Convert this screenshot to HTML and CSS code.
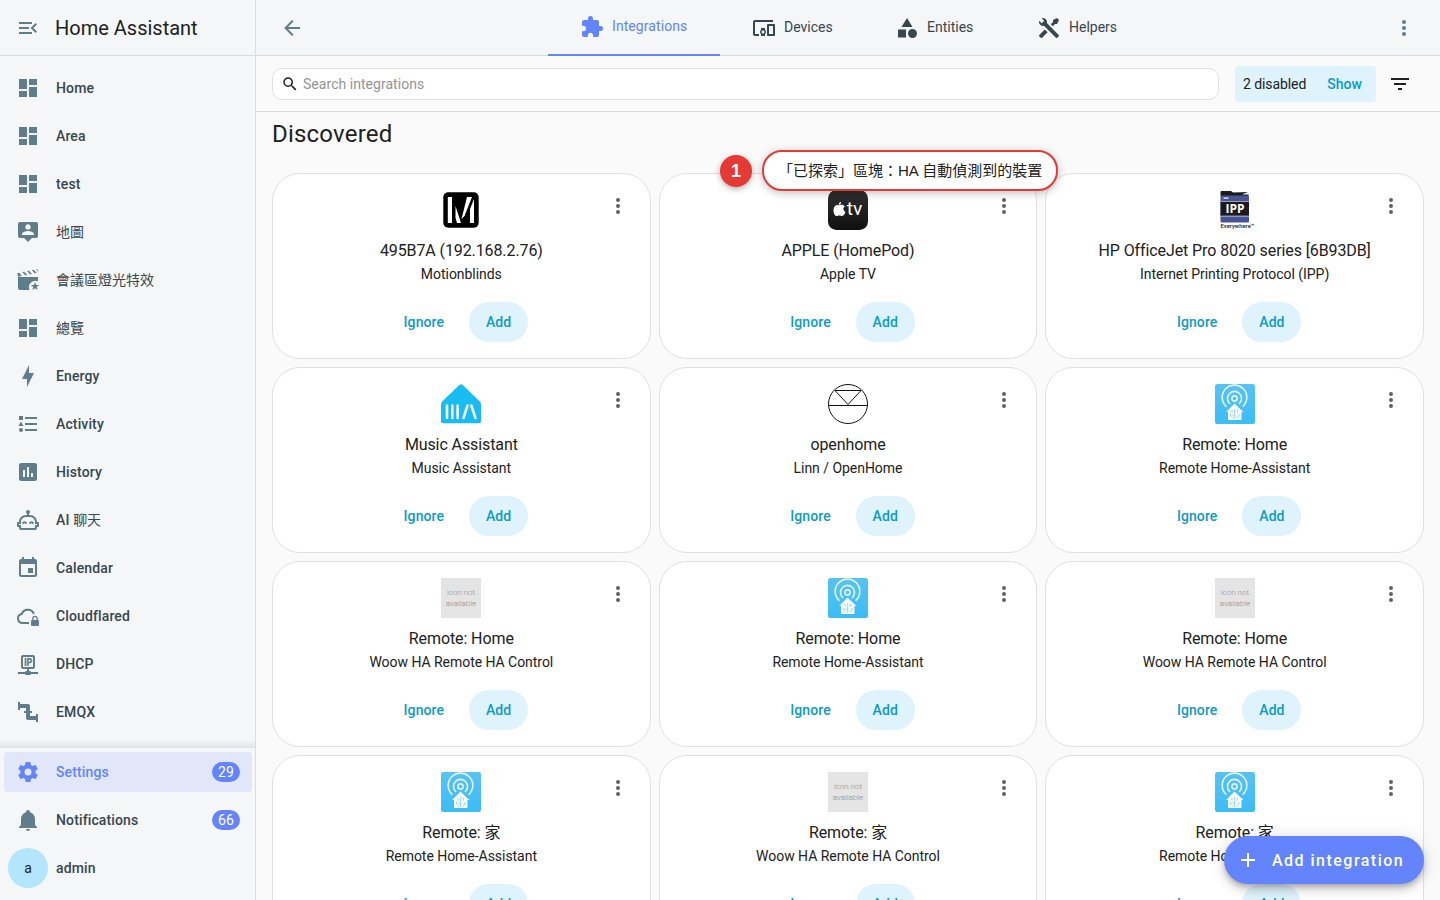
FILE: index.html
```html
<!DOCTYPE html>
<html lang="zh-Hant">
<head>
<meta charset="utf-8">
<title>Home Assistant</title>
<link rel="stylesheet" href="styles.css">
</head>
<body>
<svg class="defs" width="0" height="0">
  <defs>
    <linearGradient id="tvGrad" x1="0" y1="0" x2="0" y2="1"><stop offset="0" stop-color="#303030"/><stop offset="1" stop-color="#101010"/></linearGradient>
    <linearGradient id="remoteGrad" x1="0" y1="0" x2="0" y2="1"><stop offset="0" stop-color="#58c2f2"/><stop offset="1" stop-color="#3bbdf5"/></linearGradient>
  </defs>
  <symbol id="dashboard" viewBox="0 0 24 24"><path d="M13,3V9H21V3M13,21H21V11H13M3,21H11V15H3M3,13H11V3H3V13Z"/></symbol>
  <symbol id="dots" viewBox="0 0 24 24"><path d="M12,16A2,2 0 0,1 14,18A2,2 0 0,1 12,20A2,2 0 0,1 10,18A2,2 0 0,1 12,16M12,10A2,2 0 0,1 14,12A2,2 0 0,1 12,14A2,2 0 0,1 10,12A2,2 0 0,1 12,10M12,4A2,2 0 0,1 14,6A2,2 0 0,1 12,8A2,2 0 0,1 10,6A2,2 0 0,1 12,4Z"/></symbol>
  <symbol id="remote" viewBox="0 0 40 40">
    <rect width="40" height="40" rx="2.5" fill="url(#remoteGrad)"/>
    <g fill="none" stroke="#e4f3fb" stroke-width="1.6" stroke-linecap="round">
      <circle cx="19.5" cy="14.5" r="2.6"/>
      <path d="M14.6 19.4A7 7 0 1 1 24.400 19.4"/>
      <path d="M11 22.300A12.300 12.300 0 1 1 28 22.300"/>
    </g>
    <path d="M19.500 19.500L28.500 28H26.500V36H13V28H11Z" fill="#f5fbfe"/>
    <path d="M19.700 25V35M17 26V28.500M22.500 26V28.500M15.500 30V32L18 34M24 30V32L21.500 34M17.200 30.500L19.700 32" fill="none" stroke="#7cc6e6" stroke-width=".7"/>
  </symbol>
  <symbol id="missing" viewBox="0 0 40 40">
    <rect width="40" height="40" fill="#e4e4e4"/>
    <text class="missing-text" x="6" y="17" textLength="28" lengthAdjust="spacingAndGlyphs">icon not</text>
    <text class="missing-text" x="4.700" y="28" textLength="30.500" lengthAdjust="spacingAndGlyphs">available</text>
  </symbol>
</svg>

<div class="app">
  <aside class="sidebar">
    <div class="brand">
      <svg class="icon" viewBox="0 0 24 24"><path d="M21,15.61L19.59,17L14.58,12L19.59,7L21,8.39L17.44,12L21,15.61M3,6H16V8H3V6M3,13V11H13V13H3M3,18V16H16V18H3Z"/></svg>
      <span>Home Assistant</span>
    </div>
    <nav class="nav">
      <a class="item"><svg class="icon"><use href="#dashboard"/></svg><span>Home</span></a>
      <a class="item"><svg class="icon"><use href="#dashboard"/></svg><span>Area</span></a>
      <a class="item"><svg class="icon"><use href="#dashboard"/></svg><span>test</span></a>
      <a class="item"><svg class="icon" viewBox="0 0 24 24"><path d="M20,2H4A2,2 0 0,0 2,4V16A2,2 0 0,0 4,18H8L12,22L16,18H20A2,2 0 0,0 22,16V4A2,2 0 0,0 20,2M12,4.3C13.5,4.3 14.7,5.5 14.7,7C14.7,8.5 13.5,9.7 12,9.7C10.5,9.7 9.3,8.5 9.3,7C9.3,5.500 10.5,4.3 12,4.3M18,15H6V14.1C6,12.1 10,11 12,11C14,11 18,12.1 18,14.1V15Z"/></svg><span class="cjk">地圖</span></a>
      <a class="item"><svg class="icon" viewBox="0 0 24 24"><path d="M2 9H22V13.300A6.600 6.600 0 0 0 13.500 22H4A2 2 0 0 1 2 20ZM1.400 5.200L3.400 4.700L5.700 8L2 8.800ZM6.200 4.100L8.200 3.700L11.200 6.900L9.200 7.300ZM11 3.100L13 2.700L16 5.900L14 6.300ZM15.800 2.200L17.800 1.800L20.700 5L18.700 5.300ZM20.300 1.300L21.400 1.100L22.200 4.600ZM19 14L20.100 17.100H23.300L20.700 19L21.700 22.100L19 20.200L16.300 22.100L17.300 19L14.700 17.100H17.900Z"/></svg><span class="cjk">會議區燈光特效</span></a>
      <a class="item"><svg class="icon"><use href="#dashboard"/></svg><span class="cjk">總覽</span></a>
      <a class="item"><svg class="icon" viewBox="0 0 24 24"><path d="M11 15H6L13 1V9H18L11 23V15Z"/></svg><span>Energy</span></a>
      <a class="item"><svg class="icon" viewBox="0 0 24 24"><path d="M5,9.5L7.5,14H2.5L5,9.5M3,4H7V8H3V4M5,20A2,2 0 0,0 7,18A2,2 0 0,0 5,16A2,2 0 0,0 3,18A2,2 0 0,0 5,20M9,5V7H21V5H9M9,19H21V17H9V19M9,13H21V11H9V13Z"/></svg><span>Activity</span></a>
      <a class="item"><svg class="icon" viewBox="0 0 24 24"><path d="M19 3H5C3.9 3 3 3.9 3 5V19C3 20.1 3.9 21 5 21H19C20.1 21 21 20.1 21 19V5C21 3.9 20.1 3 19 3M9 17H7V10H9V17M13 17H11V7H13V17M17 17H15V13H17V17Z"/></svg><span>History</span></a>
      <a class="item"><svg class="icon" viewBox="0 0 24 24"><path d="M22 14H21C21 10.13 17.87 7 14 7H13V5.73C13.6 5.39 14 4.74 14 4C14 2.9 13.11 2 12 2S10 2.900 10 4C10 4.740 10.4 5.390 11 5.730V7H10C6.130 7 3 10.130 3 14H2C1.450 14 1 14.450 1 15V18C1 18.550 1.450 19 2 19H3V20C3 21.110 3.900 22 5 22H19C20.110 22 21 21.110 21 20V19H22C22.550 19 23 18.550 23 18V15C23 14.450 22.550 14 22 14M21 17H19V20H5V17H3V16H5V14C5 11.240 7.240 9 10 9H14C16.760 9 19 11.240 19 14V16H21V17M8.500 13.300C7.200 13.300 6.200 14.200 6 15.400L7.200 16.300A1.350 1.350 0 0 1 9.800 16.300L11 15.400C10.800 14.200 9.800 13.300 8.500 13.300M15.500 13.300C14.200 13.300 13.200 14.200 13 15.400L14.200 16.300A1.350 1.350 0 0 1 16.800 16.300L18 15.400C17.800 14.200 16.800 13.300 15.500 13.300"/></svg><span>AI <span class="cjk">聊天</span></span></a>
      <a class="item"><svg class="icon" viewBox="0 0 24 24"><path d="M19,19H5V8H19M16,1V3H8V1H6V3H5C3.89,3 3,3.89 3,5V19A2,2 0 0,0 5,21H19A2,2 0 0,0 21,19V5C21,3.89 20.1,3 19,3H18V1M17,12H12V17H17V12Z"/></svg><span>Calendar</span></a>
      <a class="item"><svg class="icon" viewBox="0 0 24 24"><path d="M13 19H6.500A4.500 4.500 0 0 1 5.700 10.080A6.500 6.500 0 0 1 17.900 9.800" fill="none" stroke="currentColor" stroke-width="2"/><path d="M21.800 16V14.500A2.800 2.800 0 0 0 16.200 14.500V16A1.300 1.300 0 0 0 15 17.200V20.700A1.300 1.300 0 0 0 16.200 22H21.700A1.300 1.300 0 0 0 23 20.800V17.300A1.300 1.300 0 0 0 21.800 16M20.500 16H17.500V14.500A1.500 1.500 0 0 1 20.500 14.500Z"/></svg><span>Cloudflared</span></a>
      <a class="item"><svg class="icon" viewBox="0 0 24 24"><path d="M15 20A1 1 0 0 0 14 19H13V17H17A2 2 0 0 0 19 15V5A2 2 0 0 0 17 3H7A2 2 0 0 0 5 5V15A2 2 0 0 0 7 17H11V19H10A1 1 0 0 0 9 20H2V22H9A1 1 0 0 0 10 23H14A1 1 0 0 0 15 22H22V20M7 15V5H17V15Z"/><text class="ip-text" x="7.900" y="14" textLength="8.600" lengthAdjust="spacingAndGlyphs">IP</text></svg><span>DHCP</span></a>
      <a class="item"><svg class="icon" viewBox="0 0 24 24"><path d="M22,14H20V16H14V13H16V11H14V6A2,2 0 0,0 12,4H4V2H2V10H4V8H10V11H8V13H10V18A2,2 0 0,0 12,20H20V22H22"/></svg><span>EMQX</span></a>
    </nav>
    <div class="side-footer">
      <a class="item selected"><svg class="icon" viewBox="0 0 24 24"><path d="M12,15.5A3.5,3.5 0 0,1 8.5,12A3.5,3.5 0 0,1 12,8.5A3.5,3.5 0 0,1 15.5,12A3.5,3.5 0 0,1 12,15.5M19.43,12.97C19.47,12.65 19.5,12.33 19.5,12C19.5,11.67 19.47,11.34 19.43,11L21.54,9.37C21.73,9.22 21.78,8.95 21.66,8.73L19.66,5.27C19.54,5.05 19.27,4.96 19.05,5.05L16.56,6.05C16.04,5.66 15.5,5.32 14.87,5.07L14.5,2.42C14.46,2.18 14.25,2 14,2H10C9.75,2 9.54,2.18 9.5,2.42L9.13,5.07C8.5,5.32 7.96,5.66 7.44,6.05L4.95,5.05C4.73,4.96 4.46,5.05 4.34,5.27L2.34,8.73C2.21,8.95 2.27,9.22 2.46,9.37L4.57,11C4.53,11.34 4.5,11.67 4.5,12C4.5,12.33 4.53,12.65 4.57,12.97L2.46,14.63C2.27,14.78 2.21,15.05 2.34,15.27L4.34,18.73C4.46,18.95 4.73,19.03 4.95,18.95L7.44,17.94C7.96,18.34 8.5,18.68 9.13,18.93L9.5,21.58C9.54,21.82 9.75,22 10,22H14C14.25,22 14.46,21.82 14.5,21.58L14.87,18.93C15.5,18.67 16.04,18.34 16.56,17.94L19.05,18.95C19.27,19.03 19.54,18.95 19.66,18.73L21.66,15.27C21.78,15.05 21.73,14.78 21.54,14.63L19.43,12.97Z"/></svg><span>Settings</span><b class="badge">29</b></a>
      <a class="item"><svg class="icon" viewBox="0 0 24 24"><path d="M21,19V20H3V19L5,17V11C5,7.9 7.03,5.17 10,4.29C10,4.19 10,4.1 10,4A2,2 0 0,1 12,2A2,2 0 0,1 14,4C14,4.1 14,4.19 14,4.29C16.97,5.17 19,7.9 19,11V17L21,19M14,21A2,2 0 0,1 12,23A2,2 0 0,1 10,21"/></svg><span>Notifications</span><b class="badge">66</b></a>
      <a class="item user"><i class="avatar">a</i><span>admin</span></a>
    </div>
  </aside>

  <main class="main">
    <header class="header">
      <div class="header-side"><svg class="icon" viewBox="0 0 24 24"><path d="M20,11V13H8L13.5,18.5L12.08,19.92L4.16,12L12.08,4.08L13.5,5.5L8,11H20Z"/></svg></div>
      <div class="tabs">
        <a class="tab active"><svg class="icon" viewBox="0 0 24 24"><path d="M20.5,11H19V7C19,5.89 18.1,5 17,5H13V3.5A2.5,2.5 0 0,0 10.5,1A2.5,2.5 0 0,0 8,3.5V5H4A2,2 0 0,0 2,7V10.8H3.5C5,10.8 6.2,12 6.2,13.5C6.2,15 5,16.2 3.5,16.2H2V20A2,2 0 0,0 4,22H7.8V20.5C7.8,19 9,17.8 10.5,17.8C12,17.8 13.2,19 13.2,20.5V22H17A2,2 0 0,0 19,20V16H20.5A2.5,2.5 0 0,0 23,13.5A2.5,2.5 0 0,0 20.5,11Z"/></svg>Integrations</a>
        <a class="tab"><svg class="icon" viewBox="0 0 24 24"><path d="M3 6H21V4H3C1.9 4 1 4.9 1 6V18C1 19.1 1.9 20 3 20H7V18H3V6M13 12H9V13.78C8.39 14.33 8 15.11 8 16S8.39 17.67 9 18.22V20H13V18.22C13.61 17.67 14 16.88 14 16S13.61 14.33 13 13.78V12M11 17.5C10.17 17.5 9.5 16.83 9.5 16S10.17 14.5 11 14.5 12.5 15.17 12.5 16 11.83 17.5 11 17.5M22 8H16C15.5 8 15 8.5 15 9V19C15 19.5 15.5 20 16 20H22C22.5 20 23 19.5 23 19V9C23 8.5 22.5 8 22 8M21 18H17V10H21V18Z"/></svg>Devices</a>
        <a class="tab entities"><svg class="icon" viewBox="0 0 24 24"><path d="M11,13.5V21.5H3V13.5H11M12,2L17.5,11H6.5L12,2M17.5,13C20,13 22,15 22,17.5C22,20 20,22 17.5,22C15,22 13,20 13,17.5C13,15 15,13 17.5,13Z"/></svg>Entities</a>
        <a class="tab"><svg class="icon" viewBox="0 0 24 24"><path d="M21.71 20.29L20.29 21.71A1 1 0 0 1 18.88 21.71L7 9.85A3.81 3.81 0 0 1 6 10A4 4 0 0 1 2.22 4.7L4.76 7.24L5.29 6.71L6.71 5.29L7.24 4.76L4.7 2.22A4 4 0 0 1 10 6A3.81 3.81 0 0 1 9.85 7L21.71 18.88A1 1 0 0 1 21.71 20.29M2.29 18.88A1 1 0 0 0 2.29 20.29L3.71 21.71A1 1 0 0 0 5.12 21.71L10.59 16.25L7.76 13.42M20 2L16 4V6L13.83 8.17L15.83 10.17L18 8H20L22 4Z"/></svg>Helpers</a>
      </div>
      <div class="header-side end"><svg class="icon"><use href="#dots"/></svg></div>
    </header>

    <div class="toolbar">
      <div class="search"><svg class="search-icon" viewBox="0 0 24 24"><path d="M9.5,3A6.5,6.5 0 0,1 16,9.5C16,11.11 15.41,12.59 14.44,13.73L14.71,14H15.5L20.5,19L19,20.5L14,15.5V14.71L13.73,14.44C12.59,15.41 11.11,16 9.5,16A6.5,6.5 0 0,1 3,9.5A6.5,6.5 0 0,1 9.5,3M9.5,5C7,5 5,7 5,9.5C5,12 7,14 9.5,14C12,14 14,12 14,9.5C14,7 12,5 9.5,5Z"/></svg>Search integrations</div>
      <div class="disabled-note"><span>2 disabled</span><a class="show">Show</a></div>
      <svg class="icon filter" viewBox="0 0 24 24"><path d="M6,13H18V11H6M3,6V8H21V6M10,18H14V16H10V18Z"/></svg>
    </div>

    <section class="content">
      <h1 class="heading">Discovered</h1>
      <div class="grid">
        <article class="card"><svg class="icon menu"><use href="#dots"/></svg>
          <svg class="logo" viewBox="0 0 40 40"><rect x="2.300" y="2.300" width="35.400" height="35.400" rx="5" fill="#000"/><path d="M6.800 7H11V33H6.800ZM14.500 16L20 33H16L14.500 28ZM26 7H31L23.500 26L20.500 29ZM29 19L33 9V33H29Z" fill="#fff"/></svg>
          <h2>495B7A (192.168.2.76)</h2><p>Motionblinds</p><div class="actions"><a class="ignore">Ignore</a><a class="add">Add</a></div></article>
        <article class="card"><svg class="icon menu"><use href="#dots"/></svg>
          <svg class="logo" viewBox="0 0 40 40"><rect width="40" height="40" rx="8.500" fill="url(#tvGrad)"/><path d="M12.300 12C12.400 13.500 11.300 14.800 9.900 14.700C9.800 13.300 11 12.100 12.300 12M9.900 15.300C10.700 15.300 11.300 14.800 12.700 14.800C14 14.800 15.300 15.400 16.100 16.500C13.900 17.800 14.300 20.900 16.700 22C15.800 24.400 14.500 26 13.100 26C12 26 11.700 25.400 10.500 25.400C9.300 25.400 8.900 26 7.900 26C6 26 4.300 22.700 4.800 18.900C5.200 16.400 6.900 14.900 8.400 14.900C9.100 14.900 9.600 15.300 9.900 15.300" fill="#fff" transform="translate(.8)"/><text class="tv-text" x="18.800" y="25.300" textLength="15.600" lengthAdjust="spacingAndGlyphs">tv</text></svg>
          <h2>APPLE (HomePod)</h2><p>Apple TV</p><div class="actions"><a class="ignore">Ignore</a><a class="add">Add</a></div></article>
        <article class="card"><svg class="icon menu"><use href="#dots"/></svg>
          <svg class="logo" viewBox="0 0 40 40"><path d="M5.500 6V2.200Q5.500 1 6.700 1H16L18 2.500L33 2L27 4.500H33.500V6Z" fill="#1b1b1b"/><rect x="5.500" y="5.500" width="28.500" height="27" rx="1" fill="#47549a"/><rect x="8.500" y="7.500" width="5" height="1.200" fill="#fff"/><rect x="5.500" y="11" width="28.500" height="15.500" fill="#d8daea"/><rect x="5.500" y="11.700" width="28.500" height="14" fill="#1b1b1b"/><text class="ipp-text" x="10.500" y="22.900" textLength="19" lengthAdjust="spacingAndGlyphs">IPP</text><text class="every-text" x="5.500" y="38" textLength="34" lengthAdjust="spacingAndGlyphs">Everywhere™</text></svg>
          <h2>HP OfficeJet Pro 8020 series [6B93DB]</h2><p>Internet Printing Protocol (IPP)</p><div class="actions"><a class="ignore">Ignore</a><a class="add">Add</a></div></article>
        <article class="card"><svg class="icon menu"><use href="#dots"/></svg>
          <svg class="logo" viewBox="0 0 40 40"><path d="M18.500 .800Q20 -.500 21.500 .800L38.800 17.500Q40 18.800 40 20.500V37.500Q40 39.300 38.200 39.300H1.800Q0 39.300 0 37.500V20.500Q0 18.800 1.200 17.500Z" fill="#18bcf2"/><g stroke="#f2f4f9" stroke-width="2.600" stroke-linecap="round"><path d="M6 21.500V34M11.300 21.500V34M16.600 21.500V34M22.500 34L26.500 21.500M30.300 21.500L34.500 34"/></g></svg>
          <h2>Music Assistant</h2><p>Music Assistant</p><div class="actions"><a class="ignore">Ignore</a><a class="add">Add</a></div></article>
        <article class="card"><svg class="icon menu"><use href="#dots"/></svg>
          <svg class="logo" viewBox="0 0 40 40"><g fill="none" stroke="#111" stroke-width="1"><circle cx="20" cy="20" r="19.500"/><path d="M.5 21.500H39.500M7 6.500H33L20 20.500Z"/></g></svg>
          <h2>openhome</h2><p>Linn / OpenHome</p><div class="actions"><a class="ignore">Ignore</a><a class="add">Add</a></div></article>
        <article class="card"><svg class="icon menu"><use href="#dots"/></svg><svg class="logo"><use href="#remote"/></svg>
          <h2>Remote: Home</h2><p>Remote Home-Assistant</p><div class="actions"><a class="ignore">Ignore</a><a class="add">Add</a></div></article>
        <article class="card"><svg class="icon menu"><use href="#dots"/></svg><svg class="logo"><use href="#missing"/></svg>
          <h2>Remote: Home</h2><p>Woow HA Remote HA Control</p><div class="actions"><a class="ignore">Ignore</a><a class="add">Add</a></div></article>
        <article class="card"><svg class="icon menu"><use href="#dots"/></svg><svg class="logo"><use href="#remote"/></svg>
          <h2>Remote: Home</h2><p>Remote Home-Assistant</p><div class="actions"><a class="ignore">Ignore</a><a class="add">Add</a></div></article>
        <article class="card"><svg class="icon menu"><use href="#dots"/></svg><svg class="logo"><use href="#missing"/></svg>
          <h2>Remote: Home</h2><p>Woow HA Remote HA Control</p><div class="actions"><a class="ignore">Ignore</a><a class="add">Add</a></div></article>
        <article class="card"><svg class="icon menu"><use href="#dots"/></svg><svg class="logo"><use href="#remote"/></svg>
          <h2>Remote: 家</h2><p>Remote Home-Assistant</p><div class="actions"><a class="ignore">Ignore</a><a class="add">Add</a></div></article>
        <article class="card"><svg class="icon menu"><use href="#dots"/></svg><svg class="logo"><use href="#missing"/></svg>
          <h2>Remote: 家</h2><p>Woow HA Remote HA Control</p><div class="actions"><a class="ignore">Ignore</a><a class="add">Add</a></div></article>
        <article class="card"><svg class="icon menu"><use href="#dots"/></svg><svg class="logo"><use href="#remote"/></svg>
          <h2>Remote: 家</h2><p>Remote Home-Assistant</p><div class="actions"><a class="ignore">Ignore</a><a class="add">Add</a></div></article>
      </div>
    </section>
  </main>
</div>

<div class="callout"><span class="callout-num">1</span><span class="callout-label">「已探索」區塊：HA 自動偵測到的裝置</span></div>
<a class="fab"><svg class="icon" viewBox="0 0 24 24"><path d="M19,13H13V19H11V13H5V11H11V5H13V11H19V13Z"/></svg><span>Add integration</span></a>
</body>
</html>
```
FILE: styles.css
```css
* { box-sizing: border-box; }
body {
  margin: 0;
  height: 100vh;
  overflow: hidden;
  background: #fafafa;
  color: #212121;
  font: 14px/20px Roboto, "Noto Sans CJK TC", sans-serif;
}
.defs { position: absolute; }
.app { display: flex; height: 100vh; }
.icon { display: block; flex: none; width: 24px; height: 24px; fill: currentColor; }

/* Sidebar */
.sidebar {
  display: flex;
  flex-direction: column;
  flex: none;
  width: 256px;
  background: #f4f6f8;
  border-right: 1px solid #dadcdd;
}
.brand {
  display: flex;
  align-items: center;
  gap: 15px;
  height: 56px;
  flex: none;
  padding-left: 16px;
  border-bottom: 1px solid #d9dadb;
  font-size: 20px;
}
.brand .icon { color: #607d8b; }
.nav {
  display: flex;
  flex-direction: column;
  gap: 8px;
  flex: 1;
  min-height: 0;
  overflow: hidden;
  padding: 12px 3px 0 4px;
}
.item {
  display: flex;
  align-items: center;
  flex: none;
  gap: 16px;
  height: 40px;
  padding: 0 12px;
  border-radius: 4px;
  color: #37474f;
  font-weight: 500;
  letter-spacing: .13px;
  font-variant-ligatures: common-ligatures;
}
.item .icon { color: #607d8b; }
.cjk { font-weight: 400; letter-spacing: 0; }
.side-footer {
  position: relative;
  display: flex;
  flex-direction: column;
  gap: 8px;
  height: 152px;
  flex: none;
  padding: 4px 3px 0 4px;
}
.side-footer::before {
  content: "";
  position: absolute;
  left: 0;
  right: 0;
  top: -8px;
  height: 8px;
  background: linear-gradient(#f4f6f8, #e1e2e4);
}
.selected { background: #e1e7f8; }
.selected, .selected .icon { color: #6384fd; }
.badge {
  margin-left: auto;
  width: 28px;
  height: 20px;
  border-radius: 10px;
  background: #6384fd;
  color: #fff;
  font-weight: 400;
  text-align: center;
}
.user { padding-left: 4px; gap: 8px; }
.avatar {
  width: 40px;
  border-radius: 50%;
  background: #b3e5fc;
  color: #212121;
  font-style: normal;
  font-weight: 400;
  line-height: 40px;
  text-align: center;
}
.ip-text { font: 900 10px Roboto, sans-serif; letter-spacing: 0; }

/* Header */
.main { flex: 1; min-width: 0; display: flex; flex-direction: column; }
.header {
  display: flex;
  flex: none;
  height: 56px;
  background: #f4f6f8;
  border-bottom: 1px solid #d9dadb;
}
.header-side { display: flex; flex: 1; align-items: center; padding: 1px 24px 0; color: #607d8b; }
.end { justify-content: flex-end; }
.tabs { display: flex; }
.tab {
  display: flex;
  align-items: center;
  gap: 8px;
  width: 143px;
  height: 56px;
  padding: 0 0 2px 32px;
  color: #37474f;
}
.tab .icon { margin-top: 2px; }
.entities { width: 142px; }
.active { width: 172px; border-bottom: 2px solid #6384fd; color: #6384fd; letter-spacing: .08px; }
.active .icon { margin-top: 1px; }

/* Toolbar */
.toolbar {
  display: flex;
  align-items: center;
  flex: none;
  height: 56px;
  padding: 0 28px 0 16px;
  border-bottom: 1px solid #d9d9d9;
}
.search {
  display: flex;
  align-items: center;
  gap: 4px;
  flex: 1;
  height: 32px;
  padding-left: 8px;
  border: 1px solid #e0e0e0;
  border-radius: 10px;
  background: #fff;
  color: #949494;
  letter-spacing: .04px;
}
.search-icon { width: 18px; height: 18px; fill: #212121; }
.disabled-note {
  display: flex;
  align-items: center;
  justify-content: space-between;
  width: 141px;
  height: 36px;
  margin-left: 16px;
  padding: 0 14px 0 8px;
  border-radius: 4px;
  background: #dff3fc;
  letter-spacing: -.08px;
}
.show { color: #0c9bc8; font-weight: 500; letter-spacing: .05px; }
.filter { margin-left: 12px; }

/* Cards */
.content { padding: 6px 16px 0; }
.heading { margin: 0; font-size: 24px; line-height: 32px; font-weight: 400; letter-spacing: .2px; }
.grid { display: grid; grid-template-columns: repeat(3, 1fr); gap: 8px; margin-top: 23px; }
.card {
  position: relative;
  display: flex;
  flex-direction: column;
  align-items: center;
  height: 186px;
  padding-top: 16px;
  border: 1px solid #e0e0e0;
  border-radius: 28px;
  background: #fff;
}
.menu { position: absolute; right: 20px; top: 20px; color: #5f6164; }
.logo { display: block; width: 40px; height: 40px; }
.card h2 { margin: 9px 0 0; font-size: 16px; line-height: 24px; font-weight: 400; letter-spacing: -.1px; }
.card p { margin: 1px 0 0; letter-spacing: -.04px; }
.actions { display: flex; gap: 17px; margin-top: 18px; padding-left: 1px; line-height: 40px; color: #0c9bc8; font-weight: 500; letter-spacing: .1px; }
.ignore { padding: 0 8px; }
.add { width: 59px; border-radius: 20px; background: #dff3fc; text-align: center; }
.missing-text { font: 300 8px Roboto, sans-serif; letter-spacing: 0; fill: #8c8c8c; }
.tv-text { font: 400 19px Roboto, sans-serif; fill: #fff; }
.ipp-text { font: 700 11.5px "Open Sans", sans-serif; fill: #fff; }
.every-text { font: 500 5.5px Roboto, sans-serif; fill: #222; }

/* Floating layers */
.callout {
  position: absolute;
  left: 720px;
  top: 150px;
  display: flex;
  align-items: center;
  gap: 10px;
  font-family: "Liberation Sans", "Noto Sans CJK TC", sans-serif;
}
.callout-num {
  width: 32px;
  height: 32px;
  border-radius: 50%;
  background: #e53935;
  box-shadow: 0 2px 6px rgba(0, 0, 0, .3);
  color: #fff;
  font-size: 18px;
  font-weight: 700;
  line-height: 32px;
  text-align: center;
}
.callout-label {
  width: 296px;
  padding: 8px 0 7px 14px;
  border: 2px solid #e53935;
  border-radius: 20px;
  background: #fff;
  box-shadow: 0 2px 8px rgba(0, 0, 0, .25);
  font-size: 15px;
  line-height: 22px;
  white-space: nowrap;
}
.fab {
  position: absolute;
  right: 16px;
  bottom: 16px;
  display: flex;
  align-items: center;
  gap: 12px;
  width: 200px;
  height: 48px;
  padding-left: 12px;
  border-radius: 24px;
  background: #6384fd;
  box-shadow: 0 3px 5px -1px rgba(0, 0, 0, .2), 0 6px 10px rgba(0, 0, 0, .14), 0 1px 18px rgba(0, 0, 0, .12);
  color: #fff;
  font-size: 16px;
  font-weight: 500;
  letter-spacing: 1.48px;
}
.fab span { padding-top: 2px; }
```
